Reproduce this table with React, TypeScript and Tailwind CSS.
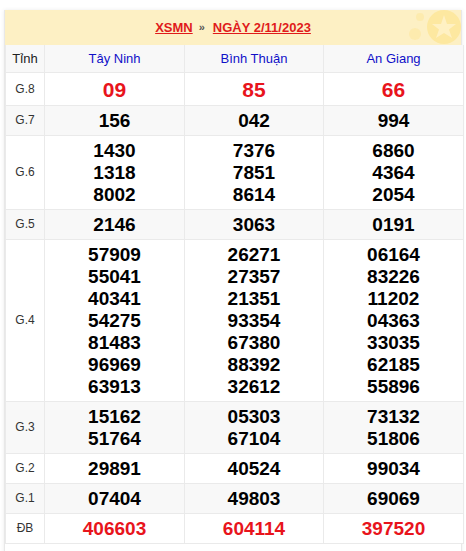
const provinces = ["Tây Ninh", "Bình Thuận", "An Giang"];

type Row = { label: string; values: string[][]; big?: boolean; red?: boolean };

const rows: Row[] = [
  { label: "G.8", values: [["09"], ["85"], ["66"]], big: true, red: true },
  { label: "G.7", values: [["156"], ["042"], ["994"]] },
  {
    label: "G.6",
    values: [
      ["1430", "1318", "8002"],
      ["7376", "7851", "8614"],
      ["6860", "4364", "2054"],
    ],
  },
  { label: "G.5", values: [["2146"], ["3063"], ["0191"]] },
  {
    label: "G.4",
    values: [
      ["57909", "55041", "40341", "54275", "81483", "96969", "63913"],
      ["26271", "27357", "21351", "93354", "67380", "88392", "32612"],
      ["06164", "83226", "11202", "04363", "33035", "62185", "55896"],
    ],
  },
  { label: "G.3", values: [["15162", "51764"], ["05303", "67104"], ["73132", "51806"]] },
  { label: "G.2", values: [["29891"], ["40524"], ["99034"]] },
  { label: "G.1", values: [["07404"], ["49803"], ["69069"]] },
  { label: "ĐB", values: [["406603"], ["604114"], ["397520"]], red: true },
];

function Star() {
  return (
    <svg width="64" height="35" viewBox="0 0 64 35" className="absolute right-0 top-0">
      <circle cx="47" cy="17" r="17" fill="#fde8a0" />
      <path
        d="M47 5 L50 14 L59 14 L52 19.5 L55 28 L47 23 L39 28 L42 19.5 L35 14 L44 14 Z"
        fill="#fff3cc"
        opacity="0.8"
      />
      <circle cx="23" cy="7" r="4" fill="#fde8a0" opacity="0.6" />
      <circle cx="18" cy="24" r="6" fill="#fde8a0" opacity="0.6" />
    </svg>
  );
}

export default function App() {
  return (
    <div className="w-[466px] h-[551px] bg-white pt-[10px] pl-[4px] overflow-hidden" style={{ fontFamily: '"Liberation Sans", Arial, sans-serif' }}>
      <div className="w-[458px] h-[560px] border-x border-[#e8e8e8] shadow-[0_0_4px_rgba(0,0,0,0.08)]">
        <div className="relative h-[35px] bg-[#fdf0c4] flex items-center justify-center text-[13px] font-bold text-[#e01b1b] overflow-hidden">
          <Star />
          <span className="relative underline">XSMN</span>
          <span className="relative ml-[6px] mr-[8px] text-[#555] text-[11px]">»</span>
          <span className="relative underline">NGÀY 2/11/2023</span>
        </div>
        <table className="w-full border-collapse table-fixed">
          <colgroup>
            <col className="w-[39px]" />
            <col className="w-[140px]" />
            <col className="w-[139px]" />
            <col className="w-[140px]" />
          </colgroup>
          <thead>
            <tr className="bg-[#f8f8f8]">
              <th className="h-[27px] p-0 border border-t-0 border-[#eaeaea] text-[13px] font-normal text-[#222]">Tỉnh</th>
              {provinces.map((p) => (
                <th key={p} className="h-[27px] p-0 border border-t-0 border-[#eaeaea] text-[13px] font-normal text-[#1010c8]">
                  {p}
                </th>
              ))}
            </tr>
          </thead>
          <tbody>
            {rows.map((r, i) => (
              <tr key={r.label} className={i % 2 === 1 ? "bg-[#f8f8f8]" : "bg-white"}>
                <td className="border border-[#eaeaea] text-center text-[12px] text-[#333]">{r.label}</td>
                {r.values.map((v, j) => (
                  <td
                    key={j}
                    className={
                      "border border-[#eaeaea] text-center font-bold pt-[4px] pb-[3px] " +
                      (r.big ? "text-[21px] leading-[25px] " : "text-[19px] leading-[22px] ") +
                      (r.red ? "text-[#e8141c]" : "text-black")
                    }
                  >
                    {v.map((n) => (
                      <div key={n}>{n}</div>
                    ))}
                  </td>
                ))}
              </tr>
            ))}
          </tbody>
        </table>
      </div>
    </div>
  );
}
